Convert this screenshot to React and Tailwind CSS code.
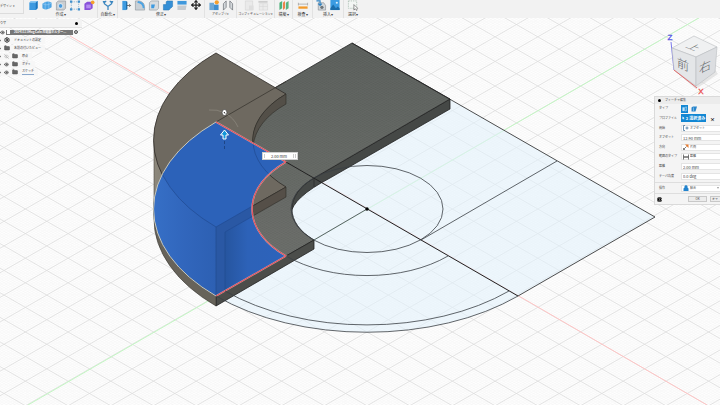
import { useState } from "react";
import { Eye, EyeOff, Folder, Settings, Move, Info } from "lucide-react";

const CX = 367;
const CY = 209;

// isometric grid, every 10th line is a major one
function Grid() {
  const minor = [];
  const major = [];
  for (let i = -220; i <= 220; i++) {
    const x = CX + i * 4.27;
    const d = `M${x - 500} ${CY - 288}L${x + 500} ${CY + 288}M${x - 500} ${CY + 288}L${x + 500} ${CY - 288}`;
    if (i % 10 === 0) major.push(d);
    else minor.push(d);
  }
  return (
    <g fill="none">
      <path d={minor.join("")} stroke="#f4f4f4" strokeWidth="0.5" />
      <path d={major.join("")} stroke="#dcdcdc" strokeWidth="0.8" />
    </g>
  );
}

function Model() {
  return (
    <svg
      viewBox="0 18 720 387"
      preserveAspectRatio="xMidYMid slice"
      className="absolute inset-0 w-full h-full"
      aria-hidden="true"
    >
      <defs>
        <linearGradient id="slab" x1="0" y1="0" x2="0" y2="1">
          <stop offset="0" stopColor="#595d5a" />
          <stop offset="1" stopColor="#6a6d68" />
        </linearGradient>
        <linearGradient id="wall" x1="0" y1="0" x2="1" y2="0">
          <stop offset="0" stopColor="#8d887c" />
          <stop offset="1" stopColor="#625d54" />
        </linearGradient>
        <linearGradient id="blueSide" x1="0" y1="0" x2="1" y2="0">
          <stop offset="0" stopColor="#366fc6" />
          <stop offset="0.5" stopColor="#3166bc" />
          <stop offset="1" stopColor="#2d60b3" />
        </linearGradient>
        <linearGradient id="blueBack" x1="0" y1="0" x2="1" y2="0">
          <stop offset="0" stopColor="#26559f" />
          <stop offset="0.35" stopColor="#2d62b8" />
          <stop offset="1" stopColor="#2d63bb" />
        </linearGradient>
        <clipPath id="profile">
          <path d="M216 122L286 162A114 66 0 0 0 286 256L216 296A213 123 0 0 1 216 122Z" />
        </clipPath>
        <clipPath id="plateTop">
          <path d="M216 122L352 43L450 99L314 178A76 44 0 0 0 314 240L216 296Z" />
        </clipPath>
      </defs>

      <rect y="0" width="720" height="405" fill="#fefefe" />
      <Grid />
      <path d="M70 36L707 405" stroke="#ffc4c4" />
      <path d="M28 405L704 15" stroke="#c3f7c3" />

      {/* sketch */}
      <path
        d="M216 122L352 43L655 217L518 296A213 123 0 0 1 216 296Z"
        fill="#e1f1fc"
        fillOpacity="0.58"
      />

      {/* base plate */}
      <path
        d="M450 99V109L330 178Q292 198 291 214A76 44 0 0 1 314 178Z"
        fill="#454846"
        stroke="#222"
        strokeWidth="0.8"
      />
      <path
        d="M216 122L352 43L450 99L314 178A76 44 0 0 0 314 240L216 296A213 123 0 0 1 216 122Z"
        fill="url(#slab)"
        stroke="#222"
        strokeWidth="0.8"
      />
      <g clipPath="url(#plateTop)" opacity="0.06">
        <Grid />
      </g>
      <path d="M314 240V249L216 306V296Z" fill="#4b4d4a" stroke="#222" strokeWidth="0.8" />
      <path
        d="M154 209V219A213 123 0 0 0 216 306V296A213 123 0 0 1 154 209Z"
        fill="#67635a"
        stroke="#33312c"
        strokeWidth="0.6"
      />

      {/* upper body */}
      <path d="M154 141V209A213 123 0 0 0 216 296V227Z" fill="url(#wall)" stroke="#4a463f" strokeWidth="0.6" />
      <path
        d="M216 53L286 94A114 66 0 0 0 286 187L216 227A213 123 0 0 1 216 53Z"
        fill="#6e6960"
        stroke="#2e2b27"
        strokeWidth="0.8"
      />
      <path
        d="M286 94V104Q256 121 253 146A114 66 0 0 1 286 94Z"
        fill="#534f48"
        stroke="#2e2b27"
        strokeWidth="0.6"
      />
      <path d="M286 187V197L225 232V227L216 227Z" fill="#554f48" stroke="#2e2b27" strokeWidth="0.6" />
      <path d="M216 122L286 81.500" stroke="#33302b" strokeWidth="0.7" />

      {/* selected profile */}
      <g clipPath="url(#profile)">
        <rect x="150" y="118" width="140" height="182" fill="#2c62b9" />
        <path d="M154 141V296H216V227A213 123 0 0 1 154 141Z" fill="url(#blueSide)" />
        <path d="M216 227L290 185V196L225 232V296H216Z" fill="#2a58a4" />
        <path d="M225 232L290 195V300H225Z" fill="url(#blueBack)" />
        <path
          d="M154 141A213 123 0 0 0 216 227L290 184.500M216 227V296M225 291V232L290 195M253 141A114 66 0 0 0 286 187"
          fill="none"
          stroke="#214a90"
          strokeWidth="0.7"
        />
      </g>
      <path d="M216 296A213 123 0 0 1 216 122" fill="none" stroke="#c9c8ba" strokeWidth="1" />
      <path
        d="M216 122L286 162A114 66 0 0 0 286 256L216 296"
        fill="none"
        stroke="#c9a9a4"
        strokeWidth="1.500"
      />
      <path
        d="M216 122L286 162A114 66 0 0 0 286 256L216 296"
        fill="none"
        stroke="#ea4658"
        strokeWidth="1"
      />

      {/* sketch curves */}
      <g fill="none" stroke="#3a3f44" strokeWidth="0.8">
        <path d="M352 43L655 217L518 296" stroke="#222" />
        <path d="M286 162L518 296" stroke="#222" strokeWidth="1" />
        <path d="M557 161L421 240M367 209L314 240" />
        <ellipse cx="367" cy="209" rx="76" ry="43.500" />
        <path d="M448 256A114 66 0 0 1 286 256" />
        <path d="M509 291A201 116 0 0 1 225 291" />
        <path d="M518 296A213 123 0 0 1 216 296" />
        <path d="M314 178V187" stroke="#222" strokeWidth="0.6" />
      </g>
      <circle cx="367" cy="209" r="1.700" fill="#000" />

      {/* manipulator */}
      <path d="M209 110Q217 109 225 113Q234 118 238 127" fill="none" stroke="#9a968d" strokeWidth="0.5" />
      <ellipse cx="224.500" cy="112.500" rx="2.400" ry="3" fill="#fff" stroke="#333" strokeWidth="0.6" />
      <path d="M224 112L225 113.500" stroke="#222" strokeWidth="1" />
      <path d="M224.500 130L228.500 135H226V139H223V135H220.500Z" fill="#1596d8" stroke="#fff" strokeWidth="1" />
      <path d="M224.500 141V149" stroke="#173a70" strokeWidth="0.7" strokeDasharray="3 2" />
    </svg>
  );
}

function ViewCube() {
  return (
    <svg viewBox="664 30 56 66" className="absolute top-3 right-0 w-[56px] h-[66px]">
      <path d="M676 72L696 89L718 74L714 68Z" fill="#cfcfcf" opacity="0.5" />
      <path d="M671 42L674 70" stroke="#7a78ec" strokeWidth="1" />
      <g stroke="#b9bcbf" strokeWidth="0.6" strokeLinejoin="round">
        <path d="M694 36L717 47L696 57L672 48Z" fill="#f0f1f2" />
        <path d="M672 48L696 57V86L674 70Z" fill="#e4e6e8" />
        <path d="M696 57L717 47L715 72L696 86Z" fill="#dcdee1" />
      </g>
      <path d="M674 70L697 88" stroke="#e46a6a" strokeWidth="1" />
      <g fill="#5d6165" fontFamily="Noto Sans CJK JP, sans-serif" fontSize="12" fontWeight="300" textAnchor="middle">
        <text transform="matrix(0.85 0.34 -0.8 0.44 690 49)">上</text>
        <text transform="translate(683 69) skewY(24)">前</text>
        <text transform="translate(705 71) skewY(-26)">右</text>
      </g>
      <g fontFamily="Liberation Sans, sans-serif" fontSize="8" textAnchor="middle">
        <text x="670" y="40" fill="#5552e6" stroke="#5552e6" strokeWidth="0.3">Z</text>
        <text x="701" y="94" fill="#ea4b4b" stroke="#ea4b4b" strokeWidth="0.3">X</text>
      </g>
    </svg>
  );
}

// 12x12 toolbar icons
const icons = {
  box: (
    <>
      <path d="M2 3L4 1H11V9L9 11H2Z" fill="#3d9ae0" />
      <path d="M2 3L4 1H11L9 3Z" fill="#8cc8f2" />
      <path d="M9 3L11 1V9L9 11Z" fill="#1d76bd" />
    </>
  ),
  form: (
    <>
      <path d="M1 4Q6 0 11 3V8Q6 12 1 9Z" fill="#4ba3e3" />
      <path d="M1 4Q6 7 11 3M4 2V10M8 2V10" stroke="#9fd2f5" strokeWidth="0.6" fill="none" />
    </>
  ),
  hole: (
    <>
      <path d="M1 3L3 1H11V9L9 11H1Z" fill="#c9cdd1" stroke="#80868b" strokeWidth="0.6" />
      <circle cx="5.500" cy="6.500" r="2.500" fill="#4a9bdc" stroke="#fff" strokeWidth="0.7" />
    </>
  ),
  sketch: (
    <>
      <rect x="2" y="2" width="8" height="8" fill="none" stroke="#5c93bd" strokeWidth="0.6" strokeDasharray="1.500 1" />
      <path d="M0.500 0.500H3V3H0.500ZM9 0.500H11.500V3H9ZM0.500 9H3V11.500H0.500ZM9 9H11.500V11.500H9Z" fill="#4290cc" />
    </>
  ),
  purple: (
    <>
      <path d="M1 4L4 2H10V9L7 11H1Z" fill="#8a52d9" />
      <path d="M3 5H8V9H3Z" fill="#b48cf0" />
      <circle cx="10" cy="2.500" r="2" fill="#f5a02d" />
    </>
  ),
  auto: (
    <path d="M2 1V4L6 7L10 4V1M6 7V11M4 1L2 3L0.500 1.500M8 1L10 3L11.500 1.500" fill="none" stroke="#3b86bf" strokeWidth="1.400" />
  ),
  press: (
    <>
      <path d="M2 1H6V11H2Z" fill="#3d9ae0" />
      <path d="M6 1L7.500 2V10L6 11Z" fill="#1d6fae" />
      <path d="M7 6H11M9.500 4.500L11 6L9.500 7.500" stroke="#444" strokeWidth="0.8" fill="none" />
    </>
  ),
  fillet: (
    <>
      <path d="M1 11V1H5Q11 2 11 8V11Z" fill="#c9d0d6" stroke="#858c92" strokeWidth="0.6" />
      <path d="M4 1Q11 2 11 9L9 9Q9 4 3 3Z" fill="#4ba3e3" />
    </>
  ),
  shell: (
    <>
      <path d="M1 3L3 1H11V9L9 11H1Z" fill="#d8dcdf" stroke="#858c92" strokeWidth="0.6" />
      <path d="M3 5H7L6 9H3Z" fill="#3d9ae0" />
    </>
  ),
  combine: (
    <path d="M4 2L5 1H11V7L9 9H8V10L7 11H1V5H4Z" fill="#358fd6" stroke="#1b6cab" strokeWidth="0.5" />
  ),
  split: (
    <>
      <path d="M1 1H11V5H1Z" fill="#3f98dc" />
      <path d="M1 6H11L10 11H1Z" fill="#c6cbd0" />
    </>
  ),
  component: (
    <>
      <path d="M1 3H6V11H1Z" fill="#6fa9d6" />
      <path d="M6 5H11V11H6Z" fill="#3f8fcf" />
      <circle cx="9" cy="2.500" r="2.300" fill="#f5a02d" />
    </>
  ),
  joint: (
    <path d="M1 11V4L4 1V8ZM11 11V4L8 1V8Z" fill="#d4d8db" stroke="#6d7378" strokeWidth="0.8" />
  ),
  config: (
    <g opacity="0.35">
      <path d="M2 1H10V11H2Z" fill="#ddd" stroke="#999" strokeWidth="0.6" />
      <path d="M6 6H11V11H6Z" fill="#bbb" />
    </g>
  ),
  table: (
    <g opacity="0.4">
      <path d="M1 1H11V3H1Z" fill="#999" />
      <path d="M2 4H11V11H2ZM2 7H11M6 4V11" fill="#e4e4e4" stroke="#aaa" strokeWidth="0.6" />
    </g>
  ),
  plane: (
    <>
      <path d="M1 3L4 1V9L1 11Z" fill="#4db07a" />
      <path d="M5 3L7 1V9L5 11Z" fill="#ee7a3c" />
      <path d="M8 3L11 1V9L8 11Z" fill="#59b481" />
    </>
  ),
  measure: (
    <>
      <path d="M1 3V6M11 3V6M1 4.500H11" stroke="#888" strokeWidth="0.6" />
      <rect x="1" y="7" width="10" height="2.500" fill="#f39a2b" />
    </>
  ),
  insert: (
    <>
      <path d="M3 3H9L11 6V11H3Z" fill="#d3d7da" stroke="#7d8388" strokeWidth="0.6" />
      <path d="M1 1H5V5M3 4L5 6L7 4" stroke="#2f81c0" strokeWidth="1.200" fill="none" />
      <circle cx="7" cy="8" r="1.800" fill="#6e757a" />
    </>
  ),
  image: (
    <>
      <rect x="1" y="0" width="10" height="11" fill="#3b9be2" />
      <path d="M1 9L4 5L7 9L9 7L11 9V11H1Z" fill="#1c6dab" />
      <circle cx="8" cy="3" r="1.200" fill="#d6edfc" />
    </>
  ),
  select: (
    <>
      <rect x="1" y="1" width="9" height="8" fill="#f3f6f4" stroke="#8aa796" strokeWidth="0.6" strokeDasharray="1.500 1" />
      <path d="M7 5V11L8.500 9.500L10 11.500L10.500 9H11Z" fill="#fff" stroke="#444" strokeWidth="0.6" />
    </>
  ),
};

const groups = [
  { label: "作成", items: ["box", "form", "hole", "sketch", "purple"], width: "w-[74px]", text: "text-[4px]" },
  { label: "自動化", items: ["auto"], width: "w-[20px]", text: "text-[4px]" },
  { label: "修正", items: ["press", "fillet", "shell", "combine", "split", "move"], width: "w-[87px]", text: "text-[4px]" },
  { label: "アセンブリ", items: ["component", "joint"], width: "w-[32px]", text: "text-[3px]" },
  { label: "コンフィギュレーション", items: ["config", "table"], width: "w-[38px]", text: "text-[3px]" },
  { label: "構築", items: ["plane"], width: "w-[18px]", text: "text-[4px]" },
  { label: "検査", items: ["measure"], width: "w-[20px]", text: "text-[4px]" },
  { label: "挿入", items: ["insert", "image"], width: "w-[31px]", text: "text-[4px]" },
  { label: "選択", items: ["select"], width: "w-[18px]", text: "text-[4px]" },
];

function Toolbar() {
  return (
    <header className="relative z-10 flex h-[18px] shrink-0 bg-[#f2f2f2] text-[#444]">
      <button className="h-[14px] w-[24px] border-r border-b border-[#dcdcdc] text-left text-[3px] leading-none whitespace-nowrap">
        デザイン ▾
      </button>
      {groups.map((g) => (
        <div
          key={g.label}
          className={`${g.width} shrink-0 border-r border-[#e2e2e2] last:border-0 flex flex-col items-center`}
        >
          <div className="flex gap-[2px] h-[11px]">
            {g.items.map((name) => (
              <button key={name} aria-label={name} className="w-3 h-[11px] flex items-start justify-center">
                {name === "move" ? (
                  <Move size={10} strokeWidth={3} color="#222" />
                ) : (
                  <svg viewBox="0 0 12 12" className="w-3 h-[11px]">
                    {icons[name]}
                  </svg>
                )}
              </button>
            ))}
          </div>
          <button className={`${g.text} h-[6px] leading-[6px] whitespace-nowrap`}>{g.label}▾</button>
        </div>
      ))}
    </header>
  );
}

const nodes = [
  { label: "ドキュメントの設定", icon: "gear", text: "text-[3px]" },
  { label: "名前の付いたビュー", icon: "folder", text: "text-[3px]" },
  { label: "原点", icon: "folder", eye: "off", text: "text-[3px]" },
  { label: "ボディ", icon: "folder", eye: "on", text: "text-[3px]" },
  { label: "スケッチ", icon: "folder", eye: "on", text: "text-[3px]", active: true },
];

function Browser() {
  return (
    <aside className="absolute top-px left-0 w-[82px] text-[#333]">
      <div className="h-[9px] flex items-center justify-between bg-[#f3f3f3] border-b border-[#e2e2e2] pr-1">
        <span className="text-[3px] leading-none">ウザ</span>
        <span className="w-[3px] h-[3px] rounded-full bg-black" />
      </div>
      <div className="h-2 flex items-center gap-px">
        <Eye size={5} strokeWidth={3} />
        <div className="flex h-[5px] w-[67px] items-center gap-1 bg-[#777] text-white">
          <span className="ml-px w-[3px] h-1 bg-white" />
          <span className="text-[3px] leading-[5px] font-bold whitespace-nowrap">
            20241123Mug Cafe 充電器ホルダー...
          </span>
        </div>
        <input
          type="radio"
          aria-label="アクティブにする"
          defaultChecked
          className="appearance-none w-1 h-1 rounded-full border border-[#555] bg-[#bbb]"
        />
      </div>
      <ul>
        {nodes.map((n) => (
          <li key={n.label} className="h-2 flex items-center">
            <div className="h-[7px] flex items-center gap-[3px] bg-[#f6f6f6]/90 pr-1">
              <svg viewBox="0 0 2 4" className="w-px h-[3px]">
                <path d="M0 0L2 2L0 4Z" fill="#555" />
              </svg>
              {n.eye === "on" && <Eye size={5} strokeWidth={3} />}
              {n.eye === "off" && <EyeOff size={5} strokeWidth={2} color="#999" />}
              {n.icon === "gear" ? (
                <Settings size={6} strokeWidth={4} />
              ) : (
                <Folder size={6} fill="#666" stroke="#555" />
              )}
              <span
                className={`${n.text} leading-[5px] ml-px whitespace-nowrap ${
                  n.active ? "border-b border-[#8aa8cc]" : ""
                }`}
              >
                {n.label}
              </span>
            </div>
          </li>
        ))}
      </ul>
    </aside>
  );
}

function Row({ label, id, children }) {
  return (
    <div className="flex items-center pl-1">
      <label htmlFor={id} className="w-[22px] shrink-0 text-[3px] leading-none whitespace-nowrap">
        {label}
      </label>
      {children}
    </div>
  );
}

function SelectField({ id, value, icon }) {
  return (
    <div className="flex flex-1 items-center gap-px h-[7px] bg-white border border-r-0 border-[#e4e4e4] px-px">
      <svg viewBox="0 0 12 12" className="w-[6px] h-[6px] shrink-0">
        {icon}
      </svg>
      <select id={id} className="appearance-none flex-1 min-w-0 text-[3px] leading-[5px] bg-transparent">
        <option>{value}</option>
      </select>
      <svg viewBox="0 0 4 3" className="w-[2px] h-[2px] shrink-0">
        <path d="M0 0H4L2 3Z" fill="#777" />
      </svg>
    </div>
  );
}

function TextField({ id, value, onChange }) {
  return (
    <input
      id={id}
      value={value}
      onChange={onChange}
      className="flex-1 min-w-0 h-[7px] bg-white border border-r-0 border-[#e4e4e4] px-px text-[4px] leading-none"
    />
  );
}

function FeaturePanel({ distance, setDistance }) {
  const [offset, setOffset] = useState("12.90 mm");
  const [taper, setTaper] = useState("0.0 deg");

  return (
    <form
      onSubmit={(e) => e.preventDefault()}
      className="absolute top-[78px] right-0 w-[66px] overflow-hidden bg-[#f4f4f4] border border-r-0 border-[#dadada] text-[#444]"
    >
      <div className="h-[7px] flex items-center gap-1 bg-[#ececec] pl-[3px]">
        <span className="w-[3px] h-[3px] rounded-full bg-black" />
        <h2 className="text-[3px] leading-none">フィーチャ編集</h2>
      </div>

      <div className="grid auto-rows-fr h-[77px]">
        <Row label="タイプ" id="type">
          <button id="type" aria-label="ソリッド" className="w-[7px] h-2 bg-[#1287d3] p-px">
            <svg viewBox="0 0 12 12" className="w-full h-full">
              <path d="M1 2H6V11H1Z" fill="#bfe2fa" />
              <path d="M7 2L11 1V10L7 11Z" fill="none" stroke="#fff" />
            </svg>
          </button>
          <button aria-label="薄い" className="ml-[3px] w-[6px] h-[6px]">
            <svg viewBox="0 0 12 12" className="w-full h-full">
              <path d="M1 3L4 1H12L9 11H1Z" fill="#2a86cc" />
              <path d="M5 3V10" stroke="#bfe2fa" />
            </svg>
          </button>
        </Row>
        <Row label="プロファイル" id="profileSel">
          <button
            id="profileSel"
            className="flex items-center justify-center gap-px w-[25px] h-2 bg-[#1287d3] text-white text-[4px] leading-none font-bold whitespace-nowrap"
          >
            <svg viewBox="0 0 12 12" className="w-[3px] h-1">
              <path d="M2 0V11L5 8L7 12L9 11L7 7H11Z" fill="#fff" />
            </svg>
            2 選択済み
          </button>
          <button aria-label="クリア" className="ml-1 text-[5px] leading-none font-bold text-black">
            ×
          </button>
        </Row>
        <Row label="開始" id="start">
          <SelectField
            id="start"
            value="オフセット"
            icon={<path d="M4 1H1V11H4M5 6H11M8 3V9" fill="none" stroke="#3d6f99" strokeWidth="1.500" />}
          />
        </Row>
        <Row label="オフセット" id="offset">
          <TextField id="offset" value={offset} onChange={(e) => setOffset(e.target.value)} />
        </Row>
        <Row label="方向" id="direction">
          <SelectField
            id="direction"
            value="片側"
            icon={
              <>
                <path d="M4 1H11V8Z" fill="#e8782a" />
                <path d="M1 11L7 5M1 8V11H4" stroke="#555" strokeWidth="1.500" fill="none" />
              </>
            }
          />
        </Row>
        <Row label="範囲のタイプ" id="extent">
          <SelectField
            id="extent"
            value="距離"
            icon={<path d="M1 1V11M11 1V11M1 6H11M4 4V8M8 4V8" stroke="#333" strokeWidth="1.300" />}
          />
        </Row>
        <Row label="距離" id="distance">
          <TextField id="distance" value={distance} onChange={(e) => setDistance(e.target.value)} />
        </Row>
        <Row label="テーパ角度" id="taper">
          <TextField id="taper" value={taper} onChange={(e) => setTaper(e.target.value)} />
        </Row>
      </div>

      <div className="grid h-3 border-y border-[#dedede] mt-px">
        <Row label="操作" id="operation">
          <SelectField
            id="operation"
            value="結合"
            icon={<path d="M3 5V2L6 0L9 2V5L11 7V12H1V7Z" fill="#2383cd" />}
          />
        </Row>
      </div>

      <div className="h-[10px] flex items-center pl-[2px] text-[3px] leading-none">
        <Info size={5} fill="#000" stroke="#fff" className="shrink-0 rounded-full bg-black" />
        <button className="ml-[26px] w-[19px] h-[6px] shrink-0 border border-[#c8c8c8] bg-[#ececec]">OK</button>
        <button className="ml-[3px] flex-1 h-[6px] overflow-hidden border border-r-0 border-[#c8c8c8] bg-[#ececec] pl-px text-left whitespace-nowrap">
          キャ
        </button>
      </div>
    </form>
  );
}

export default function App() {
  const [distance, setDistance] = useState("2.00 mm");

  return (
    <div className="h-screen flex flex-col overflow-hidden bg-white font-['Noto_Sans_CJK_JP',sans-serif]">
      <Toolbar />
      <main className="relative flex-1">
        <Model />
        <Browser />
        <ViewCube />
        <FeaturePanel distance={distance} setDistance={setDistance} />

        <div className="absolute left-[262px] top-[134px] flex items-center w-[36px] h-2 bg-white border border-[#cfcfcf] text-[#333]">
          <span className="ml-px w-px h-1 bg-[#ccc]" />
          <input
            aria-label="距離"
            value={distance}
            onChange={(e) => setDistance(e.target.value)}
            className="flex-1 min-w-0 text-center text-[4px] leading-none"
          />
          <button aria-label="オプション" className="mr-px w-[3px] h-1 border-x border-[#ccc]" />
        </div>
      </main>
    </div>
  );
}
